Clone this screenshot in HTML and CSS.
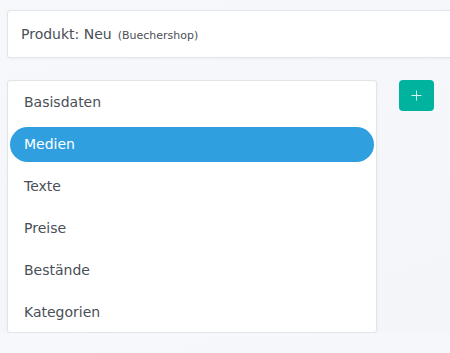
FILE: index.html
```html
<!DOCTYPE html>
<html lang="de">
<head>
    <meta charset="UTF-8">
    <meta name="viewport" content="width=device-width, initial-scale=1.0">
    <title>Produkt: Neu</title>
    <link rel="stylesheet" href="styles.css">
</head>
<body>
    <div class="page">
        <!-- Page header -->
        <div class="header-card">
            <span class="title">Produkt: Neu</span>
            <small class="shop">(Buechershop)</small>
        </div>

        <div class="content">
            <ul class="tab-nav">
                <li class="tab">Basisdaten</li>
                <li class="tab active">Medien</li>
                <li class="tab">Texte</li>
                <li class="tab">Preise</li>
                <li class="tab">Bestände</li>
                <li class="tab">Kategorien</li>
            </ul>

            <button class="add-btn" title="Hinzufügen">
                <svg width="11" height="11" viewBox="0 0 11 11">
                    <path d="M5.5 0.5v10M0.5 5.5h10" stroke="#d9f5f1" stroke-width="1" fill="none"/>
                </svg>
            </button>
        </div>
    </div>
</body>
</html>
```

FILE: styles.css
```css
/* Global Styles */
body {
    margin: 0;
    font-family: 'DejaVu Sans', Verdana, sans-serif;
    background: linear-gradient(160deg, #f6f8fb, #f3f5f9);
    color: #4a4f57;
    overflow: hidden;
}

.page {
    padding: 10px 0 0 7px;
    overflow: hidden;
}

/* header card runs off the right edge */
.header-card {
    height: 46px;
    margin-right: -4px;
    display: flex;
    align-items: center;
    gap: 6px;
    padding-left: 13px;
    background: #ffffff;
    border: 1px solid #e1e4e8;
    border-radius: 3px;
    box-shadow: 0 1px 3px rgba(0, 0, 0, 0.04);
}

.title {
    font-size: 14px;
}

.shop {
    font-size: 11px;
    padding-top: 2px;
}

.content {
    display: flex;
    align-items: flex-start;
    gap: 22px;
    margin-top: 22px;
}

/* Side navigation */
.tab-nav {
    list-style: none;
    margin: 0;
    padding: 4px 2px 2px;
    width: 364px;
    background: #ffffff;
    border: 1px solid #e1e4e8;
    border-radius: 3px;
    box-shadow: 0 1px 3px rgba(0, 0, 0, 0.04);
}

.tab {
    height: 35px;
    line-height: 35px;
    padding-left: 14px;
    margin-bottom: 7px;
    font-size: 14px;
    border-radius: 18px;
}

.tab:last-child {
    margin-bottom: 0;
}

.tab.active {
    background: #2f9fdf;
    color: #ffffff;
}

.add-btn {
    width: 35px;
    height: 31px;
    padding: 0;
    display: flex;
    align-items: center;
    justify-content: center;
    background: #00b39e;
    border: none;
    border-radius: 4px;
    cursor: pointer;
}
```
